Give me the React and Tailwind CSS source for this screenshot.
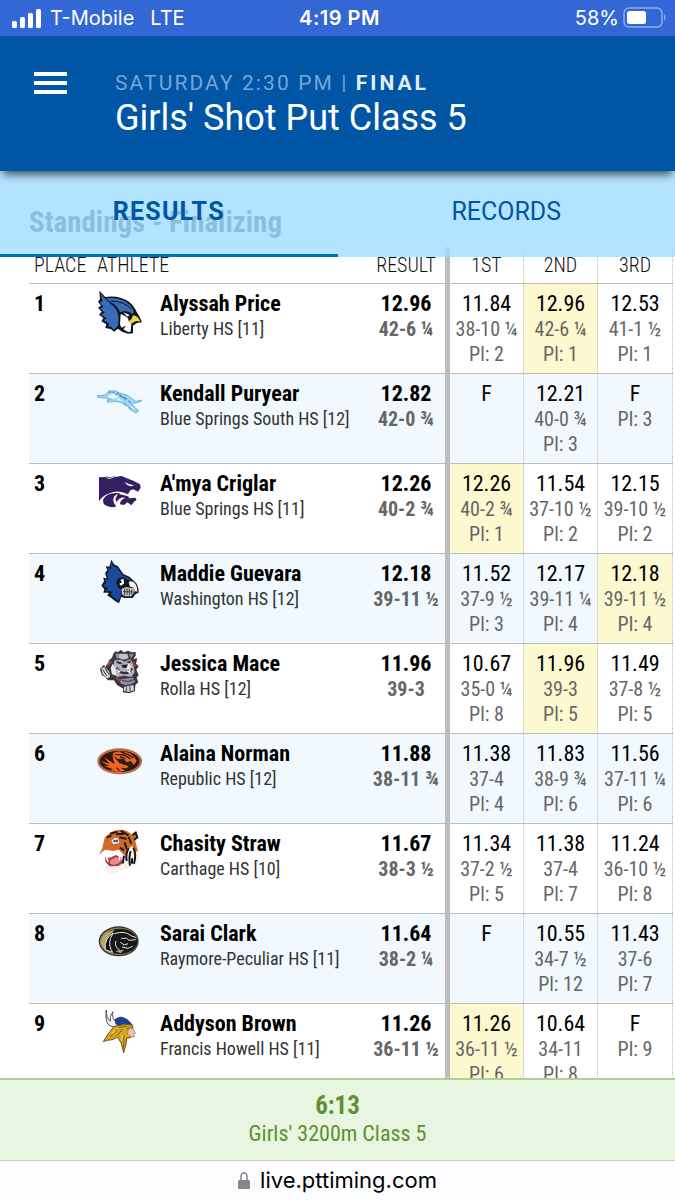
import React, { useState } from 'react'
import clsx from 'clsx'

const BlueJayLogo = () => (
  <svg viewBox="0 0 138 138" className="size-full" aria-hidden="true">
    <path
      d="M10 5 L28 24 Q52 20 76 27 Q104 36 116 58 Q122 70 130 82 L138 100 L121 103 L111 110 L111 133 L96 134 L78 128 L66 119 L54 128 L44 120 L28 117 L31 106 L16 97 L22 87 L9 77 L17 68 L6 56 L15 50 L6 38 L12 30Z"
      fill="#10131c"
    />
    <path
      d="M14 14 L32 34 L48 48 Q62 58 66 76 L68 88 L66 110 Q58 120 53 122 L46 114 L36 112 L40 104 L22 94 L32 88 L15 77 L26 71 L12 58 L23 54 L12 41 L19 36Z"
      fill="#3a6ab8"
    />
    <path d="M30 28 Q78 22 104 50 Q112 60 114 70 L108 76 Q98 66 84 66 L72 70 Q66 52 48 42 Q36 36 30 28Z" fill="#3a6ab8" />
    <path d="M44 36 Q84 36 106 60" fill="none" stroke="#10131c" strokeWidth="3" />
    <path d="M74 75 L86 80 L96 88 L98 96 L106 104 L104 128 L96 129 L82 121 L90 110 L76 116 L72 106Z" fill="#fff" />
    <path d="M82 70 L101 78 L94 83Z" fill="#fff" />
    <path d="M111 79 Q126 80 133 98 L120 96 L106 104 L98 97 Q109 90 111 79Z" fill="#f2d43a" />
  </svg>
)

const JaguarLogo = () => (
  <svg viewBox="0 0 138 138" className="size-full" aria-hidden="true">
    <path
      d="M4 50 L27 48 L38 36 Q56 32 72 42 L92 48 Q108 58 119 67 L138 63 L134 68 L114 73 L108 78 L126 93 L127 98 L117 102 L103 90 L84 73 L60 67 L35 70 L33 63 L50 58 L34 58 L5 55Z"
      fill="#9fd3ee"
      stroke="#4b9fcd"
      strokeWidth="2"
    />
    <path d="M38 48 L52 44 L67 55 L51 60 L37 56Z M60 63 L81 67 L68 58Z M106 81 L117 91 L106 86Z" fill="#e9f7fd" />
    <path
      d="M39 41 l7 -2 m4 0 l7 3 m3 2 l6 3 m7 2 l7 5 m4 2 l8 5 m5 4 l9 8 m-23 1 l9 6 m7 6 l7 6 M65 41 l11 12 l17 8"
      stroke="#2685bb"
      strokeWidth="4"
      strokeDasharray="4 3"
      fill="none"
    />
  </svg>
)

const WildcatLogo = () => (
  <svg viewBox="0 0 138 138" className="size-full" aria-hidden="true">
    <path
      d="M9 25 L29 24 Q37 35 56 24 L77 21 Q91 28 112 35 L132 46 L134 56 L126 68 L112 61 L103 64 L96 76 Q64 59 35 75 Q18 82 9 97Z"
      fill="#35205f"
    />
    <path d="M31 21 Q42 29 55 20 L56 22 Q41 31 31 24Z" fill="#35205f" />
    <path d="M86 39 Q98 47 115 49 L105 52 Q93 50 86 39Z" fill="#fff" />
    <path d="M66 72 Q33 70 22 90 Q16 113 53 115 L61 112 Q47 96 54 84 Q58 76 75 72Z" fill="#35205f" />
    <path
      d="M66 74 L96 82 L100 88 L118 86 L122 92 L114 98 L106 109 L94 100 L84 108 L72 106 Q72 92 88 86 Q70 82 62 100 L58 90Z"
      fill="#35205f"
    />
  </svg>
)

const CardinalLogo = () => (
  <svg viewBox="0 0 138 138" className="size-full" aria-hidden="true">
    <path
      d="M46 2 L54 16 L66 22 L82 45 L100 53 L113 65 Q128 75 128 101 L119 105 L110 117 L85 117 L76 113 L69 133 L57 126 L43 115 L34 110 L38 101 L22 101 L25 91 L16 80 L24 67 L22 56 L32 58 L27 42 L34 34 L29 22 L40 23Z"
      fill="#101923"
    />
    <path
      d="M45 9 L51 21 L64 26 L79 49 L98 57 L106 66 L94 62 L82 54 L66 58 L60 72 L66 84 L74 92 L76 106 L67 126 L49 112 L44 106 L50 97 L29 97 L36 87 L21 80 L30 72 L27 60 L38 62 L32 44 L39 38 L34 27 L45 29Z"
      fill="#1b4a9d"
    />
    <path d="M73 62 L83 60 L84 74 L74 80 L70 74 L78 70Z" fill="#fff" />
    <path d="M98 68 Q110 64 118 74 Q125 84 124 98 L117 97 L112 86 L101 82Z" fill="#f4f2ee" />
    <path d="M76 90 L90 84 L112 88 L116 98 L106 112 L86 112 L78 106Z" fill="#c9c7c2" />
    <path d="M86 89 v20 M93 88 v20 M100 89 v20 M107 92 v15 M81 98 L113 99" stroke="#3a3f47" strokeWidth="3" fill="none" />
  </svg>
)

const BulldogLogo = () => (
  <svg viewBox="0 0 138 138" className="size-full" aria-hidden="true">
    <path
      d="M52 14 L58 7 L66 9 L74 3 L84 10 L96 5 L106 10 L119 9 L119 20 L112 30 L124 28 L120 44 L128 52 L121 62 L128 78 L122 86 L127 100 L118 108 L117 126 L99 133 L80 130 L82 119 L63 108 L54 94 L36 94 L28 84 L17 78 L12 60 L24 47 L28 54 L36 46 L39 34 L48 26Z"
      fill="#3a3640"
    />
    <path d="M58 14 L68 13 L72 24 L62 30Z M98 16 L114 14 L106 28Z" fill="#8f8b98" />
    <path d="M70 14 L94 14 L98 28 L84 32 L68 28Z" fill="#c3c0cc" />
    <path d="M56 34 L76 32 L84 38 L104 30 L112 46 L116 70 L106 84 L84 80 L64 84 L48 70 L52 50Z" fill="#b3b0bd" />
    <path d="M50 44 L58 58 L62 80 L48 76 L44 58Z M88 44 L102 46 L110 66 L92 60Z" fill="#eceae9" />
    <path d="M62 36 L80 42 L74 46 L62 42Z M90 40 L106 34 L102 42Z M76 48 L96 46 L92 56 L80 57Z" fill="#25232b" />
    <path d="M63 56 Q70 74 88 72 Q100 72 108 58" fill="none" stroke="#3a2c2c" strokeWidth="7" />
    <path d="M64 60 l4 9 l5 -4 M103 61 l-3 9 l-6 -4" fill="none" stroke="#fff" strokeWidth="4" />
    <path d="M16 58 L26 54 L40 68 L42 84 L34 88 L20 76Z M84 114 L112 108 L114 124 L98 129 L84 126Z" fill="#d9d6cf" />
    <path d="M20 62 l12 18 M27 58 l12 18 M92 115 l-2 13 M102 112 v15" stroke="#35323b" strokeWidth="3" fill="none" />
    <path d="M60 86 L74 96 M32 52 L46 36 M110 38 L118 52" stroke="#9b4439" strokeWidth="7" />
    <path d="M76 90 L112 86 L118 98 L104 106 L86 108 L72 102Z" fill="#9490a3" />
    <path d="M78 94 L96 98 L114 92" stroke="#4b4754" strokeWidth="4" fill="none" />
  </svg>
)

const TigerOvalLogo = () => (
  <svg viewBox="0 0 138 138" className="size-full" aria-hidden="true">
    <ellipse cx="71" cy="67" rx="67" ry="39" fill="#8a7567" />
    <ellipse cx="71" cy="67" rx="64" ry="36" fill="#e8602a" />
    <ellipse cx="71" cy="67" rx="60" ry="32" fill="#2b1c17" />
    <path d="M50 42 Q78 30 104 44 Q116 52 122 66 L114 78 L104 66 L92 70 L84 60 L66 60 L54 52Z" fill="#ee6428" />
    <path d="M12 66 L40 74 L24 54 L56 76 L48 46 L70 72 L98 82 L92 88 L74 86 L88 96 L62 99 L40 93 L52 91 L22 80 L40 82Z" fill="#ee6428" />
    <path d="M58 46 L84 48 L104 60 M74 38 L94 46 L112 56 M72 54 L88 58 M62 86 L70 95" stroke="#2b1c17" strokeWidth="4" fill="none" />
  </svg>
)

const TigerHeadLogo = () => (
  <svg viewBox="0 0 138 138" className="size-full" aria-hidden="true">
    <path d="M106 60 L122 56 L130 84 L122 110 L98 118 L72 126 L62 110Z" fill="#f4f1ee" />
    <path d="M18 60 L26 27 Q43 4 72 2 Q94 2 108 18 L118 8 L125 20 L118 36 L126 68 L116 66 L108 50 L98 60 L92 80 L80 76 L70 64 L40 68 L10 74Z" fill="#d06a2a" />
    <path
      d="M42 14 L64 8 M60 16 L84 14 M74 5 L98 20 M32 26 L46 20 M70 25 L92 30 M86 40 L92 60 M98 24 L106 44 M109 18 L119 11 L124 26 L114 32 M72 56 L84 64"
      stroke="#231a18"
      strokeWidth="6"
      fill="none"
    />
    <path d="M46 36 L56 26 L66 28 L70 42 L52 46Z" fill="#e8f0f0" />
    <path d="M52 36 L66 36" stroke="#2e6a86" strokeWidth="7" />
    <path d="M16 70 L28 62 L52 66 L66 62 L78 72 L82 92 L74 84 L58 78 L40 86 L24 82Z" fill="#fff" />
    <path d="M28 84 L42 86 L60 78 L76 86 L78 104 L66 112 L40 112 L28 98Z" fill="#a83e48" />
    <path d="M44 92 L62 84 L72 90 L70 102 L54 108 L42 104Z" fill="#ee8a92" />
    <path d="M32 84 l4 14 M70 82 l2 12" stroke="#fff" strokeWidth="5" />
    <path d="M30 112 L48 116 L68 112 L64 128 L46 133 L32 126Z" fill="#fbf3f4" stroke="#f0dfe2" strokeWidth="2" />
    <path
      d="M98 58 Q88 74 92 96 M104 66 Q98 84 102 110 M112 56 Q122 74 114 104 M84 80 L80 104 M108 88 L108 104"
      stroke="#171719"
      strokeWidth="6"
      fill="none"
    />
  </svg>
)

const PantherOvalLogo = () => (
  <svg viewBox="0 0 138 138" className="size-full" aria-hidden="true">
    <ellipse cx="68" cy="67" rx="60" ry="45" fill="#3a382d" />
    <ellipse cx="68" cy="67" rx="56" ry="41" fill="#8c8159" />
    <ellipse cx="71" cy="67" rx="53" ry="38" fill="#17181a" />
    <path d="M14 72 Q18 38 56 33 L44 46 Q26 60 30 94 Q18 86 14 72Z" fill="#b8a86c" />
    <path d="M28 92 Q24 58 52 42 L43 58 Q37 83 50 100Z" fill="#090a0b" stroke="#ecebe6" strokeWidth="3" />
    <path d="M58 96 L84 92 L74 103Z" fill="#b8a86c" />
    <path
      d="M55 44 Q87 34 105 50 L121 56 M60 66 Q54 84 72 94 M76 58 L92 58 L99 64 L119 62 M78 84 L96 88 L110 82 M73 70 L85 78 L96 74"
      fill="none"
      stroke="#e3e2dc"
      strokeWidth="3"
    />
  </svg>
)

const VikingLogo = () => (
  <svg viewBox="0 0 138 138" className="size-full" aria-hidden="true">
    <path d="M31 3 Q27 30 36 45 Q44 56 68 54 L71 44 Q55 39 52 28 Q47 16 51 8 Q39 23 43 37 Q29 24 31 3Z" fill="#f5f5f4" stroke="#4c5057" strokeWidth="3" />
    <path d="M56 31 Q74 15 94 31 L109 46 L107 53 L87 44 L67 51 L58 44Z" fill="#213f91" />
    <path d="M54 52 L90 46 L110 49 L111 56 L94 58 L106 70 L100 77 L104 86 L92 88 L90 105 L83 132 L76 103 L65 85 L48 92 L34 94 L22 98 L34 78Z" fill="#d7a51e" stroke="#695620" strokeWidth="3" />
    <path d="M98 57 L112 60 L118 73 L111 76 L116 83 L105 84 L94 75Z" fill="#edc6a4" stroke="#8a6a58" strokeWidth="2" />
    <path d="M42 84 L63 65 M64 80 L79 61 M83 119 L84 78 M68 55 L94 52" stroke="#806222" strokeWidth="3" fill="none" />
    <path d="M47 75 L57 66 M76 94 L80 78" stroke="#f3cf45" strokeWidth="4" />
  </svg>
)

// attempts: [mark, imperial, place], best is the index of the highlighted attempt
const standings = [
  {
    name: 'Alyssah Price',
    school: 'Liberty HS [11]',
    Logo: BlueJayLogo,
    mark: '12.96',
    imperial: '42-6 ¼',
    best: 1,
    attempts: [['11.84', '38-10 ¼', 2], ['12.96', '42-6 ¼', 1], ['12.53', '41-1 ½', 1]],
  },
  {
    name: 'Kendall Puryear',
    school: 'Blue Springs South HS [12]',
    Logo: JaguarLogo,
    mark: '12.82',
    imperial: '42-0 ¾',
    attempts: [['F'], ['12.21', '40-0 ¾', 3], ['F', null, 3]],
  },
  {
    name: "A'mya Criglar",
    school: 'Blue Springs HS [11]',
    Logo: WildcatLogo,
    mark: '12.26',
    imperial: '40-2 ¾',
    best: 0,
    attempts: [['12.26', '40-2 ¾', 1], ['11.54', '37-10 ½', 2], ['12.15', '39-10 ½', 2]],
  },
  {
    name: 'Maddie Guevara',
    school: 'Washington HS [12]',
    Logo: CardinalLogo,
    mark: '12.18',
    imperial: '39-11 ½',
    best: 2,
    attempts: [['11.52', '37-9 ½', 3], ['12.17', '39-11 ¼', 4], ['12.18', '39-11 ½', 4]],
  },
  {
    name: 'Jessica Mace',
    school: 'Rolla HS [12]',
    Logo: BulldogLogo,
    mark: '11.96',
    imperial: '39-3',
    best: 1,
    attempts: [['10.67', '35-0 ¼', 8], ['11.96', '39-3', 5], ['11.49', '37-8 ½', 5]],
  },
  {
    name: 'Alaina Norman',
    school: 'Republic HS [12]',
    Logo: TigerOvalLogo,
    mark: '11.88',
    imperial: '38-11 ¾',
    attempts: [['11.38', '37-4', 4], ['11.83', '38-9 ¾', 6], ['11.56', '37-11 ¼', 6]],
  },
  {
    name: 'Chasity Straw',
    school: 'Carthage HS [10]',
    Logo: TigerHeadLogo,
    mark: '11.67',
    imperial: '38-3 ½',
    attempts: [['11.34', '37-2 ½', 5], ['11.38', '37-4', 7], ['11.24', '36-10 ½', 8]],
  },
  {
    name: 'Sarai Clark',
    school: 'Raymore-Peculiar HS [11]',
    Logo: PantherOvalLogo,
    mark: '11.64',
    imperial: '38-2 ¼',
    attempts: [['F'], ['10.55', '34-7 ½', 12], ['11.43', '37-6', 7]],
  },
  {
    name: 'Addyson Brown',
    school: 'Francis Howell HS [11]',
    Logo: VikingLogo,
    mark: '11.26',
    imperial: '36-11 ½',
    best: 0,
    attempts: [['11.26', '36-11 ½', 6], ['10.64', '34-11', 8], ['F', null, 9]],
  },
]

function StatusBar() {
  return (
    <div className="grid h-9 shrink-0 grid-cols-3 items-center bg-[#3367d6] pr-2 pl-3 font-['Inter',sans-serif] text-[20px] text-white">
      <div className="flex items-center gap-2">
        <svg viewBox="0 0 30 19" className="h-[19px] w-[30px]" fill="currentColor" aria-hidden="true">
          <rect x="0" y="12" width="5" height="7" rx="1.5" />
          <rect x="8" y="8" width="5" height="11" rx="1.5" />
          <rect x="16" y="4" width="5" height="15" rx="1.5" />
          <rect x="24" y="0" width="5" height="19" rx="1.5" />
        </svg>
        <span>T-Mobile</span>
        <span className="ml-2">LTE</span>
      </div>
      <div className="text-center font-semibold tracking-wide">4:19 PM</div>
      <div className="flex items-center justify-end gap-1">
        <span>58%</span>
        <svg viewBox="0 0 44 22" className="h-[22px] w-[44px]" aria-hidden="true">
          <rect x="1" y="1" width="38" height="19" rx="5" fill="none" stroke="#8fabea" strokeWidth="1.5" />
          <rect x="4" y="4" width="19" height="13" rx="2.5" fill="#fff" />
          <path d="M41 7 Q44 10 41 14Z" fill="#8fabea" />
        </svg>
      </div>
    </div>
  )
}

function Header() {
  return (
    <header className="relative z-20 flex h-[135px] shrink-0 items-start bg-[#0055a5] shadow-[0_7px_8px_-3px_rgba(0,0,0,0.6)]">
      <button type="button" aria-label="Open menu" className="mt-9 ml-[34px] flex w-[33px] flex-col gap-[5px]">
        <span className="h-1 w-full bg-white" />
        <span className="h-1 w-full bg-white" />
        <span className="h-1 w-full bg-white" />
      </button>
      <div className="mt-[33px] ml-12">
        <p className="text-[21px] leading-7 tracking-widest text-[#76a5d8]">
          SATURDAY 2:30 PM | <span className="font-bold tracking-[3px] text-[#e3eefa]">FINAL</span>
        </p>
        <h1 className="text-[36px] leading-[42px] text-white">Girls' Shot Put Class 5</h1>
      </div>
    </header>
  )
}

function Tabs({ active, onChange }) {
  return (
    <div role="tablist" className="absolute inset-x-0 top-0 z-10 grid h-[86px] grid-cols-2 bg-[#9fddff]/80">
      {['RESULTS', 'RECORDS'].map((tab) => (
        <button
          key={tab}
          type="button"
          role="tab"
          aria-selected={active === tab}
          onClick={() => onChange(tab)}
          className={clsx(
            'border-b-[3px] pb-[2px] text-[25px] text-[#0055a5]',
            active === tab ? 'border-[#0070b8] font-bold tracking-wider' : 'border-transparent',
          )}
        >
          {tab}
        </button>
      ))}
    </div>
  )
}

function AttemptCell({ attempt, best, first }) {
  const [mark, imperial, place] = attempt
  return (
    <td
      className={clsx(
        'border-t border-r border-t-[#bdbdbd] border-r-[#bdbdbd] pt-[7px] text-center align-top text-[20px] leading-[25px] text-[#666] [border-right-style:dotted]',
        first && 'border-l-[5px] border-l-[#bdbdbd]',
        best && 'bg-[#fcf8cf]',
      )}
    >
      <div className="text-[22px] leading-[26px] text-black">{mark}</div>
      {imperial && <div>{imperial}</div>}
      {place && <div>Pl: {place}</div>}
    </td>
  )
}

function StandingsTable() {
  return (
    <table className="w-full table-fixed border-separate border-spacing-0 whitespace-nowrap">
      <colgroup>
        <col className="w-[63px]" />
        <col />
        <col className="w-[78px]" />
        <col className="w-[79px]" />
        <col className="w-[74px]" />
        <col className="w-[75px]" />
      </colgroup>
      <thead>
        <tr className="h-9 text-[20px] text-[#111]">
          <th className="pl-[5px] text-left font-light">PLACE</th>
          <th className="pl-[5px] text-left font-light">ATHLETE</th>
          <th className="font-light">RESULT</th>
          <th className="border-r border-l-[5px] border-[#bdbdbd] font-light [border-right-style:dotted]">1ST</th>
          <th className="border-r border-dotted border-[#bdbdbd] font-light">2ND</th>
          <th className="border-r border-dotted border-[#bdbdbd] font-light">3RD</th>
        </tr>
      </thead>
      <tbody>
        {standings.map(({ name, school, Logo, mark, imperial, best, attempts }, index) => (
          <tr key={name} className="h-[90px] even:bg-[#f1f9fe]">
            <td className="border-t border-[#bdbdbd] pt-[7px] pl-[5px] align-top text-[22px] leading-[26px] font-bold">
              {index + 1}
            </td>
            <td className="border-t border-[#bdbdbd] pt-[5px] pl-1 align-top">
              <div className="flex gap-[18px]">
                <div className="size-[46px] shrink-0">
                  <Logo />
                </div>
                <div className="pt-[2px]">
                  <div className="text-[22px] leading-[26px] font-bold">{name}</div>
                  <div className="text-[18px] leading-6 text-[#333]">{school}</div>
                </div>
              </div>
            </td>
            <td className="border-t border-[#bdbdbd] pt-[7px] text-center align-top font-bold">
              <div className="text-[22px] leading-[26px]">{mark}</div>
              <div className="text-[20px] leading-[25px] text-[#666]">{imperial}</div>
            </td>
            {attempts.map((attempt, i) => (
              <AttemptCell key={i} attempt={attempt} best={best === i} first={i === 0} />
            ))}
          </tr>
        ))}
      </tbody>
    </table>
  )
}

function App() {
  const [tab, setTab] = useState('RESULTS')

  return (
    <div className="flex h-screen flex-col overflow-hidden bg-white font-['Roboto',sans-serif] text-black">
      <StatusBar />
      <Header />
      <div className="relative min-h-0 flex-1">
        <Tabs active={tab} onChange={setTab} />
        <main className="h-full overflow-hidden pt-[33px] pr-[2px] pl-[29px] font-['Roboto_Condensed','Roboto',sans-serif]">
          <h2 className="mb-[7px] text-[29px] leading-9 font-bold text-[#444]">Standings - Finalizing</h2>
          <StandingsTable />
        </main>
      </div>
      <a
        href="#next-event"
        className="flex h-[83px] shrink-0 flex-col items-center border-t-2 border-b border-t-[#b1d28c] border-b-[#c9d3c4] bg-[#e8f5e0] pt-3 font-['Roboto_Condensed','Roboto',sans-serif] text-[#5c9131]"
      >
        <span className="text-[25px] leading-7 font-bold">6:13</span>
        <span className="text-[22px] leading-7">Girls' 3200m Class 5</span>
      </a>
      <div className="flex h-[39px] shrink-0 items-center justify-center gap-[10px] bg-[#fbfdfe] font-['Inter',sans-serif] text-[22px]">
        <svg viewBox="0 0 12 18" className="h-[18px] w-3" aria-hidden="true">
          <path d="M3 8 V5 Q3 1 6 1 Q9 1 9 5 V8" fill="none" stroke="#86868b" strokeWidth="1.5" />
          <rect x="0" y="8" width="12" height="9" rx="1.5" fill="#86868b" />
        </svg>
        <span>live.pttiming.com</span>
      </div>
    </div>
  )
}

export default App
